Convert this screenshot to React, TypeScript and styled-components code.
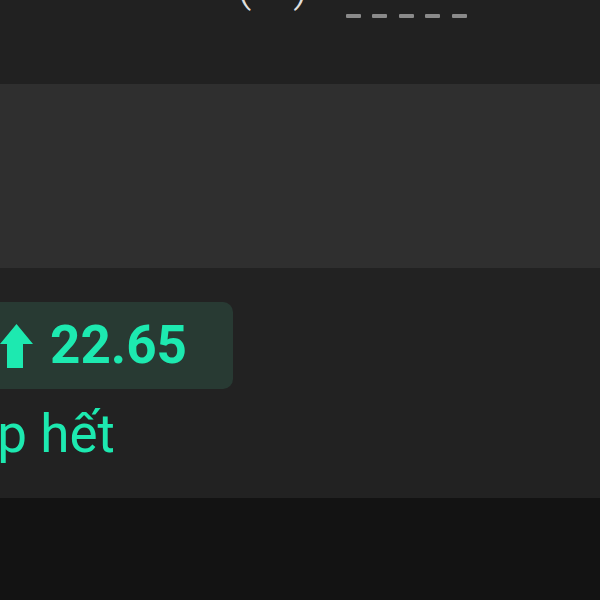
import styled, { createGlobalStyle } from 'styled-components';

const GlobalStyle = createGlobalStyle`
  body {
    margin: 0;
    background-color: #131313;
    font-family: Roboto, 'Noto Sans', sans-serif;
    overflow: hidden;
  }
`;

const Screen = styled.main`
  width: 600px;
  height: 600px;
  display: flex;
  flex-direction: column;
  overflow: hidden;
`;

const Header = styled.section`
  height: 84px;
  background-color: #212121;
  display: flex;
  align-items: flex-start;
  padding-left: 236px;
  overflow: hidden;
`;

const Score = styled.div`
  display: flex;
  gap: 42px;
  margin-top: -40px;
  font-size: 48px;
  font-weight: 300;
  color: #dedede;
  line-height: 1;
`;

const Dashes = styled.div`
  display: flex;
  gap: 11.5px;
  margin-left: 37px;
  margin-top: 14px;
`;

const Dash = styled.span`
  width: 15px;
  height: 4px;
  border-radius: 1px;
  background-color: #8a8a8a;
`;

const Band = styled.section`
  height: 184px;
  background-color: #2f2f2f;
`;

const Card = styled.section`
  height: 230px;
  background-color: #222222;
  display: flex;
  flex-direction: column;
  align-items: flex-start;
  padding-top: 34px;
  box-sizing: border-box;
`;

const ChangeBadge = styled.div`
  display: flex;
  align-items: center;
  gap: 16px;
  height: 87px;
  margin-left: -40px;
  padding: 0 46px 0 40px;
  border-radius: 10px;
  background-color: #283a33;
  color: #1de9b0;
`;

const ChangeValue = styled.span`
  font-size: 53px;
  font-weight: 700;
  line-height: 1;
`;

const Caption = styled.p`
  margin: 14px 0 0 -33px;
  font-size: 53px;
  font-weight: 400;
  line-height: 1.2;
  color: #1de9b0;
  white-space: nowrap;
`;

const Footer = styled.div`
  flex: 1;
  background-color: #131313;
`;

const ArrowUp = () => (
  <svg width="34" height="44" viewBox="0 0 34 44" fill="currentColor">
    <path d="M16.5 0 L33 20 H23 V44 H7 V20 H0 Z" />
  </svg>
);

export default function App() {
  return (
    <Screen>
      <GlobalStyle />
      <Header>
        <Score>
          <span>(</span>
          <span>)</span>
        </Score>
        <Dashes>
          {[0, 1, 2, 3, 4].map(i => (
            <Dash key={i} />
          ))}
        </Dashes>
      </Header>
      <Band />
      <Card>
        <ChangeBadge>
          <ArrowUp />
          <ChangeValue>22.65</ChangeValue>
        </ChangeBadge>
        <Caption>ợp hết</Caption>
      </Card>
      <Footer />
    </Screen>
  );
}
